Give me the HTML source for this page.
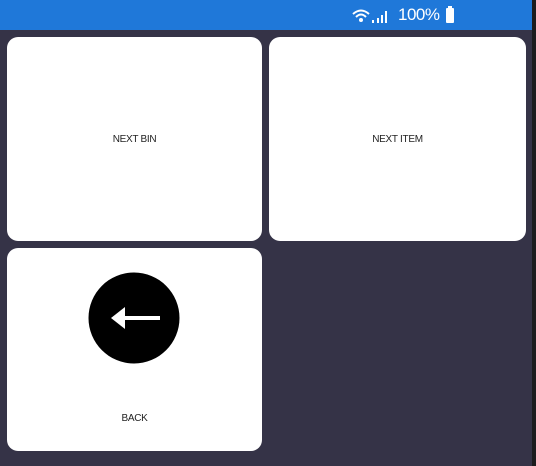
<!DOCTYPE html>
<html><head><style>
body{margin:0;width:536px;height:466px;background:#353347;position:relative;overflow:hidden;font-family:"Liberation Sans",sans-serif}
.bar{position:absolute;left:0;top:0;width:536px;height:30px;background:#1f78d9}
.edge{position:absolute;right:0;top:0;width:4px;height:466px;background:#1c1c1e}
.card{position:absolute;background:#fff;border-radius:11px;display:flex;align-items:center;justify-content:center;font-size:10px;color:#222;letter-spacing:-0.3px}
.st{position:absolute;top:5px;left:398px;color:#fff;font-size:17px;letter-spacing:-0.5px}
</style></head><body>
<div class="bar"></div>
<svg style="position:absolute;left:350px;top:6px" width="50" height="20" viewBox="0 0 50 20">
<path d="M3 8 Q11 1 19 8" stroke="#fff" stroke-width="2" fill="none"/>
<path d="M6 11 Q11 6 16 11" stroke="#fff" stroke-width="2" fill="none"/>
<circle cx="11" cy="14" r="2" fill="#fff"/>
<rect x="22" y="14" width="2" height="3" fill="#fff"/>
<rect x="27" y="12" width="2" height="5" fill="#fff"/>
<rect x="31" y="9" width="2" height="8" fill="#fff"/>
<rect x="35" y="5" width="2" height="12" fill="#fff"/>
</svg>
<div class="st">100%</div>
<div style="position:absolute;left:446px;top:8px;width:8px;height:15px;background:#fff;border-radius:1px"></div>
<div style="position:absolute;left:448px;top:6px;width:4px;height:2px;background:#fff"></div>
<div class="card" style="left:7px;top:37px;width:255px;height:204px">NEXT BIN</div>
<div class="card" style="left:269px;top:37px;width:257px;height:204px">NEXT ITEM</div>
<div class="card" style="left:7px;top:248px;width:255px;height:203px;align-items:flex-start">
<svg style="position:absolute;left:81px;top:24px" width="92" height="92" viewBox="0 0 92 92">
<circle cx="46" cy="46" r="45.5" fill="#000"/>
<path d="M23 46 L37 35 L37 57 Z" fill="#fff"/>
<rect x="35" y="44" width="37" height="4" fill="#fff"/>
</svg>
<div style="position:absolute;top:165px;width:100%;text-align:center">BACK</div>
</div>
<div class="edge"></div>
</body></html>
